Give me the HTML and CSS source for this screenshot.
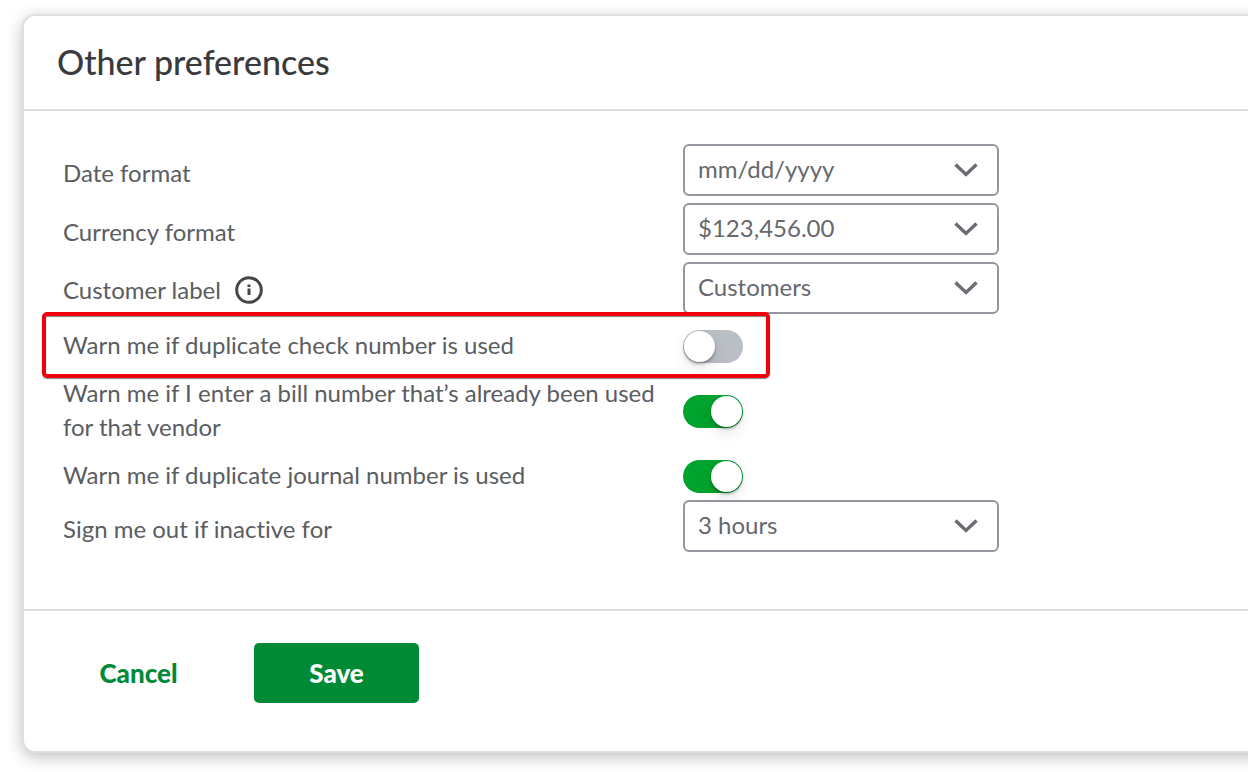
FILE: index.html
```html
<!DOCTYPE html>
<html lang="en">
<head>
    <meta charset="UTF-8">
    <meta name="viewport" content="width=device-width, initial-scale=1.0">
    <title>Other preferences</title>
    <link rel="stylesheet" href="styles.css">
</head>
<body>
    <form class="card">
        <header class="card-header">
            <h1>Other preferences</h1>
        </header>

        <main class="card-body">
            <div class="row">
                <label for="date-format">Date format</label>
                <div class="select-box">
                    <select id="date-format">
                        <option>mm/dd/yyyy</option>
                    </select>
                    <svg class="chevron" viewBox="0 0 24 14"><path d="M1.5 1.5L12 11.5L22.5 1.5"/></svg>
                </div>
            </div>
            <div class="row">
                <label for="currency-format">Currency format</label>
                <div class="select-box">
                    <select id="currency-format">
                        <option>$123,456.00</option>
                    </select>
                    <svg class="chevron" viewBox="0 0 24 14"><path d="M1.5 1.5L12 11.5L22.5 1.5"/></svg>
                </div>
            </div>
            <div class="row row-customer">
                <div class="label-group">
                    <label for="customer-label">Customer label</label>
                    <svg class="info" viewBox="0 0 28 28">
                        <circle cx="14" cy="14" r="12.3"/>
                        <path d="M14 12.5v6.5M14 8.5v2.5"/>
                    </svg>
                </div>
                <div class="select-box">
                    <select id="customer-label">
                        <option>Customers</option>
                    </select>
                    <svg class="chevron" viewBox="0 0 24 14"><path d="M1.5 1.5L12 11.5L22.5 1.5"/></svg>
                </div>
            </div>
            <div class="row row-toggle row-highlight">
                <label for="warn-check">Warn me if duplicate check number is used</label>
                <input type="checkbox" class="toggle" id="warn-check">
            </div>
            <div class="row row-bill">
                <label for="warn-bill">Warn me if I enter a bill number that’s already been used for that vendor</label>
                <input type="checkbox" class="toggle" id="warn-bill" checked>
            </div>
            <div class="row row-journal">
                <label for="warn-journal">Warn me if duplicate journal number is used</label>
                <input type="checkbox" class="toggle" id="warn-journal" checked>
            </div>
            <div class="row">
                <label for="sign-out">Sign me out if inactive for</label>
                <div class="select-box">
                    <select id="sign-out">
                        <option>3 hours</option>
                    </select>
                    <svg class="chevron" viewBox="0 0 24 14"><path d="M1.5 1.5L12 11.5L22.5 1.5"/></svg>
                </div>
            </div>
        </main>

        <footer class="card-footer">
            <button type="button" class="button button-cancel">Cancel</button>
            <button type="button" class="button button-save">Save</button>
        </footer>
    </form>
</body>
</html>
```
FILE: styles.css
```css
*,
*::before,
*::after {
    box-sizing: border-box;
}

body {
    margin: 0;
    padding: 14px 0 18px 22px;
    font-family: Lato, "Open Sans", sans-serif;
    font-size: 24px;
    line-height: 34px;
    font-variant-ligatures: none;
    color: #5a5d62;
    background-color: #fff;
    overflow-x: hidden;
}

/* The card runs past the right side of the window */
.card {
    margin-right: -40px;
    border: 2px solid #dcdfe3;
    border-radius: 13px;
    background-color: #fff;
    box-shadow: 0 4px 16px rgba(0, 0, 0, 0.25);
}

.card-header {
    padding: 25px 33px 26px;
    border-bottom: 2px solid #dcdfe3;
}

.card-header h1 {
    margin: 0;
    font-size: 34px;
    line-height: 42px;
    font-weight: 500;
    color: #393a3d;
}

.card-body {
    padding: 33px 39px 50px;
}

/* Rows */
.row {
    position: relative;
    display: grid;
    grid-template-columns: 600px 316px;
    gap: 20px;
    align-items: center;
    min-height: 52px;
    margin-bottom: 7px;
}

.row label {
    padding-top: 6px;
}

.row-customer {
    margin-bottom: 2px;
}

.label-group {
    display: flex;
    align-items: center;
    gap: 14px;
    padding-top: 4px;
}

.row-toggle {
    min-height: 60px;
    margin-bottom: 0;
}

.row-bill {
    margin-bottom: 6px;
}

.row-journal {
    min-height: 48px;
    margin-bottom: 0;
}

.label-group label {
    padding-top: 0;
}

.row-toggle label,
.row-bill label,
.row-journal label {
    padding-top: 0;
    padding-bottom: 2px;
}

.row-highlight::after {
    content: "";
    position: absolute;
    top: -4px;
    left: -21px;
    width: 728px;
    height: 66px;
    border: 4px solid #f0000c;
    border-radius: 5px;
    box-shadow: 0 1px 1px rgba(0, 0, 0, 0.5), inset 0 1px 1px rgba(0, 0, 0, 0.5);
    pointer-events: none;
}

.info {
    width: 28px;
    height: 28px;
    fill: none;
    stroke: #44464a;
    stroke-width: 3;
}

/* Select fields */
.select-box {
    position: relative;
}

.select-box select {
    display: block;
    appearance: none;
    width: 100%;
    height: 52px;
    padding: 0 14px 3px 13px;
    border: 2px solid #93969d;
    border-radius: 6px;
    font: inherit;
    color: #66686d;
    background-color: #fff;
}

.chevron {
    position: absolute;
    top: 19px;
    right: 21px;
    width: 24px;
    height: 14px;
    fill: none;
    stroke: #6b6c72;
    stroke-width: 3.4;
    pointer-events: none;
}

/* Toggles */
.toggle {
    appearance: none;
    width: 60px;
    height: 33px;
    margin: 0;
    padding: 1px;
    border-radius: 17px;
    background-color: #babec5;
}

.toggle::before {
    content: "";
    display: block;
    width: 31px;
    height: 31px;
    border-radius: 50%;
    background-color: #fff;
    box-shadow: 0 2px 3px rgba(0, 0, 0, 0.3), 0 6px 14px rgba(0, 0, 0, 0.1);
}

.toggle:checked {
    background-color: #00a32e;
}

.toggle:checked::before {
    margin-left: 27px;
}

/* Footer */
.card-footer {
    display: flex;
    gap: 40px;
    padding: 32px 39px 48px;
    border-top: 2px solid #dcdfe3;
}

.button {
    height: 60px;
    border: none;
    border-radius: 5px;
    font: inherit;
    font-size: 26px;
    font-weight: 900;
    cursor: pointer;
}

.button-cancel {
    width: 151px;
    color: #00893a;
    background-color: transparent;
}

.button-save {
    width: 165px;
    color: #fff;
    background-color: #008a36;
}
```
